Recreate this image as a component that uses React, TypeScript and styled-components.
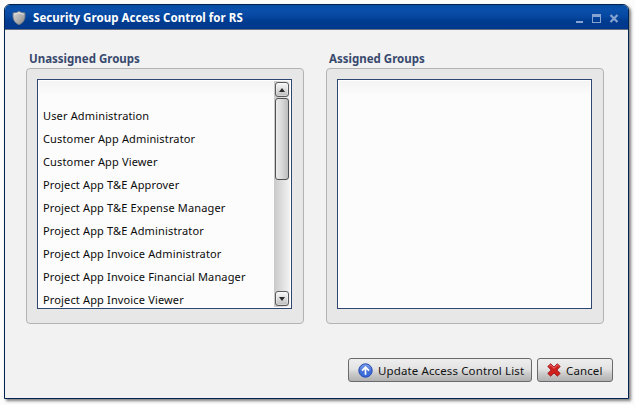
import React from "react";
import styled, { createGlobalStyle } from "styled-components";

const GlobalStyle = createGlobalStyle`
  * { box-sizing: border-box; }
  html, body { margin: 0; height: 100%; overflow: hidden; background: #fcfcfc; }
  body { font-family: "Noto Sans", "Open Sans", sans-serif; font-size: 11px; color: #0b0b0b; }
`;

const Desktop = styled.div`
  width: 635px;
  height: 405px;
  padding: 4px;
`;

const Dialog = styled.div`
  width: 625px;
  height: 395px;
  display: flex;
  flex-direction: column;
  border: 1px solid #02234f;
  border-radius: 6px 6px 0 0;
  background: #f2f2f2;
  box-shadow: 2px 2px 3px rgba(0, 0, 0, 0.5);
  overflow: hidden;
`;

const TitleBar = styled.header`
  height: 25px;
  flex: none;
  display: flex;
  align-items: center;
  padding: 1px 9px 0 7px;
  background: linear-gradient(#074a9f 0, #0a50ab 4px, #0648a2 11px, #003b90 16px, #00378d 100%);
  border-bottom: 1px solid #66707f;
`;

const Title = styled.h1`
  flex: 1;
  margin: 1px 0 0 7px;
  font-size: 11.5px;
  line-height: 16px;
  font-weight: 700;
  letter-spacing: 0.04px;
  color: #fff;
  white-space: nowrap;
`;

const WindowControls = styled.div`
  display: flex;
  padding-top: 2px;
  color: #86a3d1;
  svg { display: block; }
`;

const Columns = styled.div`
  display: flex;
  gap: 22px;
  padding: 21px 0 0 21px;
`;

const Group = styled.section`
  width: 278px;
`;

const GroupLabel = styled.h2`
  margin: 0;
  padding-left: 3px;
  height: 17px;
  font-size: 11.5px;
  line-height: 16px;
  font-weight: 700;
  color: #38496e;
  white-space: nowrap;
`;

const Panel = styled.div`
  height: 256px;
  padding: 10px;
  border: 1px solid #b3b3b3;
  border-radius: 4px;
  background: #e7e7e7;
`;

const ListBox = styled.div`
  display: flex;
  width: 255px;
  height: 230px;
  padding: 1px;
  border: 1px solid #2f4770;
  background: linear-gradient(#f3f3f3, #fcfcfc 16px);
  box-shadow: inset 0 0 0 1px #fff;
  overflow: hidden;
`;

const Items = styled.ul`
  flex: 1;
  min-width: 0;
  margin: 0;
  padding: 23px 0 0 4px;
  list-style: none;
`;

const Item = styled.li`
  height: 23px;
  line-height: 23px;
  letter-spacing: 0.15px;
  white-space: nowrap;
`;

const Track = styled.div`
  width: 16px;
  height: 226px;
  padding: 1px;
  display: flex;
  flex-direction: column;
  background: linear-gradient(90deg, #c9c9c9, #e0e0e0 55%, #f3f3f3);
`;

const Arrow = styled.div`
  width: 14px;
  height: 15px;
  flex: none;
  display: flex;
  align-items: center;
  justify-content: center;
  border: 1px solid #5a5a5c;
  border-radius: 3px;
  background: linear-gradient(#f7f7f7, #dedede 50%, #bcbcbc);
  box-shadow: inset 0 0 0 1px rgba(255, 255, 255, 0.35);
`;

const Thumb = styled.div`
  width: 14px;
  height: 82px;
  margin: 1px 0 auto;
  border: 1px solid #515153;
  border-radius: 3px;
  background: linear-gradient(90deg, #ececec, #dadada 45%, #bdbdbd);
`;

const Footer = styled.footer`
  margin-top: auto;
  display: flex;
  justify-content: flex-end;
  gap: 5px;
  padding: 0 15px 16px 0;
`;

const Button = styled.button<{ $width: number }>`
  width: ${(p) => p.$width}px;
  height: 24px;
  display: flex;
  align-items: center;
  gap: 5px;
  padding: 0 0 0 9px;
  border: 1px solid #6a6a6c;
  border-radius: 3px;
  background: linear-gradient(#eeeeee, #e3e3e3 45%, #cccccc 65%, #b1b1b1);
  font: inherit;
  font-size: 11.5px;
  letter-spacing: 0.12px;
  color: #111;
  white-space: nowrap;
  svg { flex: none; }
`;

const ButtonText = styled.span`
  padding-top: 1px;
`;

const ShieldIcon = () => (
  <svg width="14" height="16" viewBox="0 0 14 16">
    <defs>
      <linearGradient id="shield" x1="0" y1="0" x2="1" y2="1">
        <stop offset="0" stopColor="#d8d8d8" />
        <stop offset="0.5" stopColor="#b3b3b3" />
        <stop offset="1" stopColor="#858585" />
      </linearGradient>
    </defs>
    <path
      d="M7 1.2C5.5 2.3 3.4 2.9 1 2.9c.1 2.4-.3 4 .6 6.600C2.500 12 4.500 13.600 7 14.700c2.500-1.100 4.500-2.700 5.400-5.200.9-2.600.5-4.200.6-6.600-2.400 0-4.500-.6-6-1.700z"
      fill="url(#shield)"
      stroke="#777d86"
      strokeWidth="0.9"
    />
    <path d="M2.200 4.200C4 4.100 5.700 3.500 7 2.600c1.300.9 3 1.500 4.800 1.600" fill="none" stroke="#eeeeee" strokeWidth="0.8" />
  </svg>
);

const ControlIcons = () => (
  <svg width="43" height="11" viewBox="0 0 43 11">
    <rect x="0" y="8" width="7" height="2" fill="currentColor" />
    <path d="M16 1h9v9h-9zM17 4v5h7V4z" fill="currentColor" fillRule="evenodd" />
    <path d="M34.500 2l7 7M41.500 2l-7 7" stroke="currentColor" strokeWidth="2.200" />
  </svg>
);

const ArrowGlyph = ({ down }: { down?: boolean }) => (
  <svg width="6" height="4" viewBox="0 0 6 4">
    <path d={down ? "M0 0h6L3 4z" : "M0 4h6L3 0z"} fill="#2b2b2b" />
  </svg>
);

const UploadIcon = () => (
  <svg width="15" height="15" viewBox="0 0 15 15">
    <defs>
      <linearGradient id="blue" x1="0" y1="0" x2="0" y2="1">
        <stop offset="0" stopColor="#82a5ed" />
        <stop offset="0.5" stopColor="#4772d7" />
        <stop offset="1" stopColor="#3568dc" />
      </linearGradient>
    </defs>
    <circle cx="7.500" cy="7.500" r="6.700" fill="url(#blue)" stroke="#2849b0" strokeWidth="1" />
    <path d="M7.500 11.800V4.500M4 7.700l3.500-3.500L11 7.700" fill="none" stroke="#fff" strokeWidth="1.700" />
  </svg>
);

const CancelIcon = () => (
  <svg width="14" height="14" viewBox="0 0 14 14">
    <path
      d="M3.700.8L7 4 10.300.8l2.900 2.600L9.900 7l3.300 3.500-2.900 2.700L7 10l-3.300 3.200-2.900-2.700L4.100 7 .8 3.400z"
      fill="#cf2020"
      stroke="#a41717"
      strokeWidth="0.9"
      strokeLinejoin="round"
    />
    <path d="M2.200 3.300l1.500-1.200L7 5.300l3.300-3.200 1.500 1.200" fill="none" stroke="#ee7773" strokeWidth="1" />
  </svg>
);

const groups = [
  "User Administration",
  "Customer App Administrator",
  "Customer App Viewer",
  "Project App T&E Approver",
  "Project App T&E Expense Manager",
  "Project App T&E Administrator",
  "Project App Invoice Administrator",
  "Project App Invoice Financial Manager",
  "Project App Invoice Viewer",
];

export default function App() {
  return (
    <Desktop>
      <GlobalStyle />
      <Dialog>
        <TitleBar>
          <ShieldIcon />
          <Title>Security Group Access Control for RS</Title>
          <WindowControls><ControlIcons /></WindowControls>
        </TitleBar>
        <Columns>
          <Group>
            <GroupLabel>Unassigned Groups</GroupLabel>
            <Panel>
              <ListBox>
                <Items>
                  {groups.map((name) => <Item key={name}>{name}</Item>)}
                </Items>
                <Track>
                  <Arrow><ArrowGlyph /></Arrow>
                  <Thumb />
                  <Arrow><ArrowGlyph down /></Arrow>
                </Track>
              </ListBox>
            </Panel>
          </Group>
          <Group>
            <GroupLabel>Assigned Groups</GroupLabel>
            <Panel><ListBox /></Panel>
          </Group>
        </Columns>
        <Footer>
          <Button $width={184}><UploadIcon /><ButtonText>Update Access Control List</ButtonText></Button>
          <Button $width={76}><CancelIcon /><ButtonText>Cancel</ButtonText></Button>
        </Footer>
      </Dialog>
    </Desktop>
  );
}
